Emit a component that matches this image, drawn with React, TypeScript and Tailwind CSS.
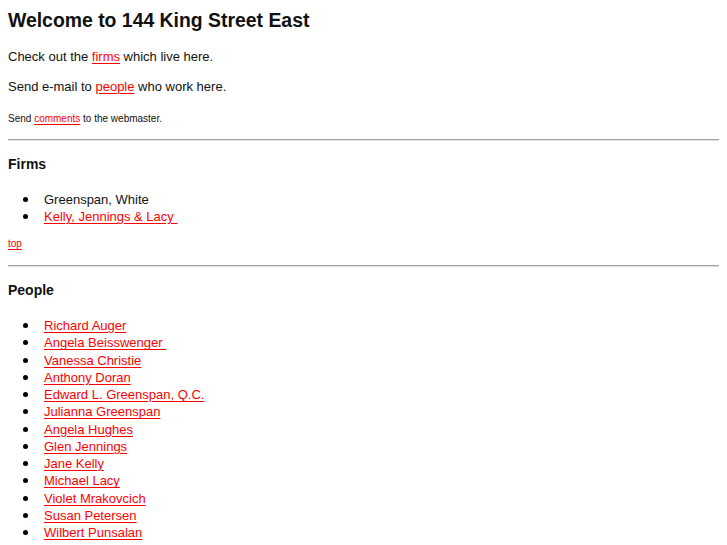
import React from "react";

const firms: { name: string; link: boolean }[] = [
  { name: "Greenspan, White", link: false },
  { name: "Kelly, Jennings & Lacy\u00a0", link: true },
];

const people = [
  "Richard Auger",
  "Angela Beisswenger\u00a0",
  "Vanessa Christie",
  "Anthony Doran",
  "Edward L. Greenspan, Q.C.",
  "Julianna Greenspan",
  "Angela Hughes",
  "Glen Jennings",
  "Jane Kelly",
  "Michael Lacy",
  "Violet Mrakovcich",
  "Susan Petersen",
  "Wilbert Punsalan",
  "Harvey Strosberg",
];

const linkCls = "text-[#ff0000] underline underline-offset-[2px]";

function Item({ children, tall }: { children: React.ReactNode; tall?: boolean }) {
  return (
    <li
      className={
        tall
          ? "flex items-center h-[17.25px] leading-[17.25px]"
          : "flex items-center h-[17px] leading-[17px]"
      }
    >
      <span className="w-[21px] flex items-center">
        <span className="block w-[5px] h-[5px] rounded-full bg-black" />
      </span>
      <span>{children}</span>
    </li>
  );
}

function Rule() {
  return <div className="h-[2px] border-t border-t-[#a3a3a3] border-b border-b-[#e2e2e2]" />;
}

export default function App() {
  return (
    <div
      className="bg-white text-[#111] p-2 min-h-[545px]"
      style={{ fontFamily: '"Liberation Sans", Arial, sans-serif' }}
    >
      <h1 className="text-[19.4px] leading-[24px] font-bold">Welcome to 144 King Street East</h1>
      <p className="mt-[16px] text-[13px] leading-[17px]">
        Check out the <a className={linkCls}>firms</a> which live here.
      </p>
      <p className="mt-[13px] text-[13px] leading-[17px]">
        Send e-mail to <a className={linkCls}>people</a> who work here.
      </p>
      <p className="mt-[18px] text-[10px] leading-[12px]">
        Send <a className={linkCls}>comments</a> to the webmaster.
      </p>
      <div className="mt-[14px]">
        <Rule />
      </div>
      <h2 className="mt-[15px] text-[14px] leading-[17px] font-bold">Firms</h2>
      <ul className="mt-[18px] pl-[15px] text-[13px]">
        {firms.map((f) => (
          <Item key={f.name}>{f.link ? <a className={linkCls}>{f.name}</a> : f.name}</Item>
        ))}
      </ul>
      <p className="mt-[13px] text-[10px] leading-[12px]">
        <a className={linkCls}>top</a>
      </p>
      <div className="mt-[15px]">
        <Rule />
      </div>
      <h2 className="mt-[15px] text-[14px] leading-[17px] font-bold">People</h2>
      <ul className="mt-[18px] pl-[15px] text-[13px]">
        {people.map((p) => (
          <Item key={p} tall>
            <a className={linkCls}>{p}</a>
          </Item>
        ))}
      </ul>
    </div>
  );
}
